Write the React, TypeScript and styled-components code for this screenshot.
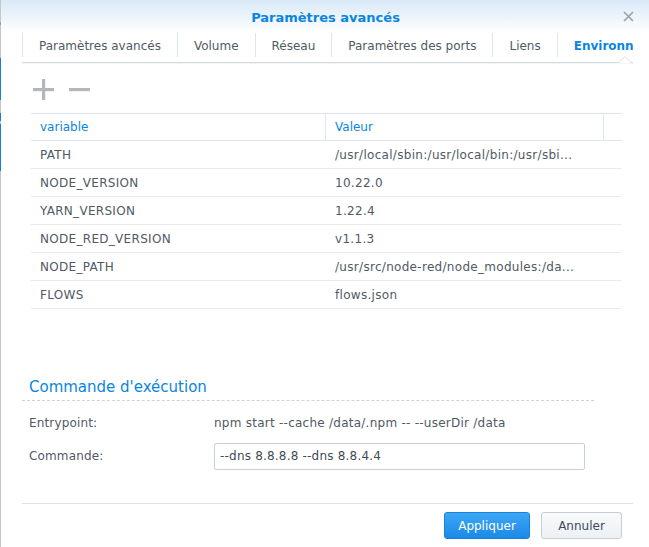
import React from "react";
import styled, { createGlobalStyle } from "styled-components";

const GlobalStyle = createGlobalStyle`
  html, body { margin: 0; padding: 0; background: #ffffff; }
  body { font-family: "DejaVu Sans", Verdana, sans-serif; font-size: 12px; color: #505a64; }
  * { box-sizing: border-box; }
`;

const Page = styled.div`
  display: flex;
  width: 649px;
  height: 547px;
  overflow: hidden;
`;

const EdgeStrip = styled.div`
  width: 1px;
  display: flex;
  flex-direction: column;
  flex: none;
`;

const EdgeSegment = styled.div<{ $h: number; $c: string }>`
  height: ${(p) => p.$h}px;
  background: ${(p) => p.$c};
  flex: none;
`;

const Dialog = styled.div`
  flex: 1;
  display: flex;
  flex-direction: column;
  min-width: 0;
`;

const Header = styled.div`
  height: 33px;
  display: grid;
  grid-template-columns: 1fr auto 1fr;
  align-items: center;
  background: linear-gradient(to bottom, #d9e9f8 0%, #eaf3fb 45%, #ffffff 100%);
  padding-right: 15px;
`;

const Title = styled.div`
  grid-column: 2;
  font-size: 13px;
  font-weight: bold;
  color: #0a86e0;
  padding: 1px 0 0 16px;
`;

const Close = styled.div`
  grid-column: 3;
  justify-self: end;
  width: 11px;
  height: 11px;
  display: flex;
  margin-top: -1px;
`;

const TabBar = styled.div`
  position: relative;
  display: flex;
  height: 30px;
  margin: 0 16px 0 21px;
  border-bottom: 1px solid #d6dbe0;
  box-shadow: 0 1px 1px rgba(0, 0, 0, 0.04);
`;

const TabClip = styled.div`
  display: flex;
  overflow: hidden;
  width: 100%;
`;

const Tab = styled.div<{ $active?: boolean }>`
  flex: none;
  height: 24px;
  line-height: 24px;
  padding: 1px 16px 0;
  border-left: 1px solid #dde5ee;
  font-size: 12px;
  white-space: nowrap;
  color: ${(p) => (p.$active ? "#0a86e0" : "#505a64")};
  font-weight: ${(p) => (p.$active ? "bold" : "normal")};
`;

const Notch = styled.div`
  position: absolute;
  right: 2px;
  bottom: -1px;
  width: 12px;
  height: 7px;
  display: flex;
`;

const Toolbar = styled.div`
  height: 50px;
  display: flex;
  align-items: flex-start;
  gap: 15px;
  padding: 16px 0 0 32px;
`;

const ToolButton = styled.div`
  width: 21px;
  height: 21px;
  display: flex;
`;

const Table = styled.div`
  margin: 0 27px 0 30px;
  display: flex;
  flex-direction: column;
`;

const HeadRow = styled.div`
  display: grid;
  grid-template-columns: 295px 278px 1fr;
  height: 28px;
  border-top: 1px solid #dce6f0;
  border-bottom: 1px solid #dce6f0;
`;

const HeadCell = styled.div<{ $sep?: boolean }>`
  padding-left: 9px;
  display: flex;
  align-items: center;
  color: #0a86e0;
  font-size: 12px;
  border-right: ${(p) => (p.$sep ? "1px solid #dce6f0" : "none")};
`;

const Row = styled.div`
  display: grid;
  grid-template-columns: 295px 278px 1fr;
  height: 28px;
  border-bottom: 1px solid #e8ebee;
`;

const Cell = styled.div`
  padding: 1px 0 0 9px;
  display: flex;
  align-items: center;
  font-size: 12px;
  letter-spacing: 0.3px;
  color: #505a64;
  white-space: nowrap;
  overflow: hidden;
`;

const Section = styled.div`
  margin: 67px 0 0 21px;
  width: 572px;
`;

const SectionTitle = styled.div`
  font-size: 15px;
  line-height: 20px;
  color: #0a86e0;
  padding: 1px 0 3px 7px;
  border-bottom: 1px dashed #c9d6e2;
`;

const Form = styled.div`
  display: flex;
  flex-direction: column;
  gap: 5px;
  padding: 8px 0 0 7px;
`;

const FormRow = styled.div`
  display: grid;
  grid-template-columns: 185px 1fr;
  align-items: center;
  height: 28px;
`;

const Label = styled.div`
  font-size: 12px;
  letter-spacing: 0.15px;
  color: #505a64;
`;

const Value = styled.div`
  font-size: 12px;
  letter-spacing: 0.25px;
  color: #505a64;
`;

const Input = styled.input`
  width: 371px;
  height: 27px;
  border: 1px solid #c6d0da;
  border-radius: 2px;
  padding: 0 5px;
  font-family: "DejaVu Sans", Verdana, sans-serif;
  font-size: 12px;
  letter-spacing: 0.2px;
  color: #414b55;
  outline: none;
  background: #fff;
`;

const Footer = styled.div`
  margin: 33px 16px 0 21px;
  border-top: 1px solid #dde1e5;
  display: flex;
  justify-content: flex-end;
  gap: 11px;
  padding: 8px 11px 0 0;
`;

const Button = styled.button<{ $primary?: boolean }>`
  height: 27px;
  padding: 0;
  width: ${(p) => (p.$primary ? 86 : 81)}px;
  border-radius: 3px;
  font-family: "DejaVu Sans", Verdana, sans-serif;
  font-size: 12px;
  border: 1px solid ${(p) => (p.$primary ? "#1683dc" : "#c5cdd5")};
  color: ${(p) => (p.$primary ? "#ffffff" : "#414b55")};
  background: ${(p) =>
    p.$primary
      ? "linear-gradient(to bottom, #3ea7f5, #1a8ae6)"
      : "linear-gradient(to bottom, #f8fafb, #edf1f4)"};
`;

const edge: [number, string][] = [
  [22, "#c4c6c8"],
  [3, "#9a9ea2"],
  [33, "#c4c6c8"],
  [42, "#1a7fd0"],
  [13, "#c4c6c8"],
  [8, "#1a7fd0"],
  [3, "#c4c6c8"],
  [47, "#1a7fd0"],
  [376, "#c4c6c8"],
];

const tabs = ["Paramètres avancés", "Volume", "Réseau", "Paramètres des ports", "Liens"];

const rows: [string, string][] = [
  ["PATH", "/usr/local/sbin:/usr/local/bin:/usr/sbi..."],
  ["NODE_VERSION", "10.22.0"],
  ["YARN_VERSION", "1.22.4"],
  ["NODE_RED_VERSION", "v1.1.3"],
  ["NODE_PATH", "/usr/src/node-red/node_modules:/da..."],
  ["FLOWS", "flows.json"],
];

export default function App() {
  return (
    <Page>
      <GlobalStyle />
      <EdgeStrip>
        {edge.map(([h, c], i) => (
          <EdgeSegment key={i} $h={h} $c={c} />
        ))}
      </EdgeStrip>
      <Dialog>
        <Header>
          <Title>Paramètres avancés</Title>
          <Close>
            <svg width="11" height="11" viewBox="0 0 11 11">
              <path d="M1 1 L10 10 M10 1 L1 10" stroke="#9aa2a9" strokeWidth="1.6" />
            </svg>
          </Close>
        </Header>
        <TabBar>
          <TabClip>
            {tabs.map((t) => (
              <Tab key={t}>{t}</Tab>
            ))}
            <Tab $active>Environnement</Tab>
          </TabClip>
          <Notch>
            <svg width="12" height="7" viewBox="0 0 12 7">
              <path d="M0 6.5 L6 0.5 L12 6.5" fill="#ffffff" stroke="#d6dbe0" strokeWidth="1" />
              <rect x="0.8" y="6" width="10.4" height="1" fill="#ffffff" />
            </svg>
          </Notch>
        </TabBar>
        <Toolbar>
          <ToolButton>
            <svg width="21" height="21" viewBox="0 0 21 21">
              <rect x="9" y="0" width="3.2" height="21" fill="#b3b7bb" />
              <rect x="0" y="9" width="21" height="3.2" fill="#b3b7bb" />
            </svg>
          </ToolButton>
          <ToolButton>
            <svg width="21" height="21" viewBox="0 0 21 21">
              <rect x="0" y="9" width="21" height="3.2" fill="#b3b7bb" />
            </svg>
          </ToolButton>
        </Toolbar>
        <Table>
          <HeadRow>
            <HeadCell $sep>variable</HeadCell>
            <HeadCell $sep>Valeur</HeadCell>
            <HeadCell />
          </HeadRow>
          {rows.map(([k, v]) => (
            <Row key={k}>
              <Cell>{k}</Cell>
              <Cell>{v}</Cell>
              <Cell />
            </Row>
          ))}
        </Table>
        <Section>
          <SectionTitle>Commande d'exécution</SectionTitle>
          <Form>
            <FormRow>
              <Label>Entrypoint:</Label>
              <Value>npm start --cache /data/.npm -- --userDir /data</Value>
            </FormRow>
            <FormRow>
              <Label>Commande:</Label>
              <Input defaultValue="--dns 8.8.8.8 --dns 8.8.4.4" />
            </FormRow>
          </Form>
        </Section>
        <Footer>
          <Button $primary>Appliquer</Button>
          <Button>Annuler</Button>
        </Footer>
      </Dialog>
    </Page>
  );
}
